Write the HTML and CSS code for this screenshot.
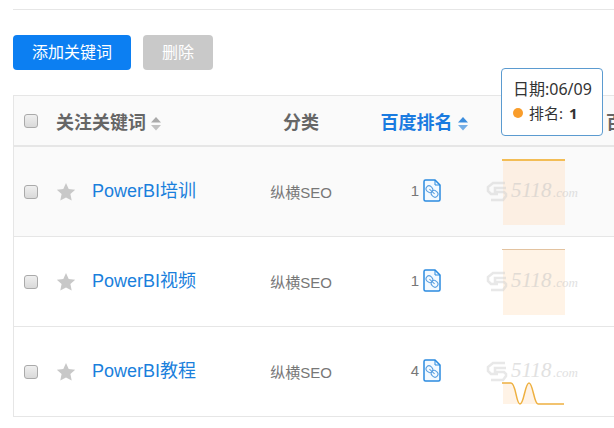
FILE: index.html
```html
<!DOCTYPE html>
<html lang="zh-CN">
<head>
    <meta charset="UTF-8">
    <meta name="viewport" content="width=device-width, initial-scale=1.0">
    <title>关键词排名</title>
    <link rel="stylesheet" href="styles.css">
</head>
<body>
    <!-- shared icons -->
    <svg class="sprite" aria-hidden="true">
        <symbol id="star" viewBox="0 0 20 20">
            <path d="M10 1l2.700 6 6.500.7-4.800 4.400 1.300 6.500L10 15.400l-5.700 3.200 1.300-6.500L.8 7.700l6.500-.7z" fill="#c8c8c8"/>
        </symbol>
        <symbol id="snapshot" viewBox="0 0 18 23">
            <g fill="none" stroke="#2b8be0">
                <path d="M2.500 1H12l5 5v14.500a1.500 1.500 0 0 1-1.500 1.500h-13A1.500 1.500 0 0 1 1 20.500v-18A1.500 1.500 0 0 1 2.500 1z" stroke-width="1.500" fill="#f4faff"/>
                <path d="M12 1v5h5"/>
                <g transform="rotate(42 9 12.500)" stroke="#5a9fe0">
                    <rect x="2" y="9.500" width="7" height="6" rx="3"/>
                    <rect x="9" y="9.500" width="7" height="6" rx="3"/>
                    <path d="M5.500 12.500h7"/>
                </g>
            </g>
        </symbol>
        <symbol id="sort" viewBox="0 0 10 14">
            <path class="sort-up" d="M0 5.500L5 0l5 5.500z"/>
            <path class="sort-down" d="M0 8h10l-5 5.500z"/>
        </symbol>
        <symbol id="mark" viewBox="0 0 24 24">
            <path d="M19 4H7L2 8v4l3 3h7M20 9H9v4h9l2 2v2l-3 4H5" fill="none" stroke="#d2d2d2" stroke-width="2.500"/>
        </symbol>
    </svg>

    <div class="page">
        <hr class="divider">

        <div class="toolbar">
            <button type="button" class="btn btn-primary">添加关键词</button>
            <button type="button" class="btn btn-disabled">删除</button>
        </div>

        <div class="table-wrap">
            <table class="rank-table">
                <colgroup>
                    <col class="col-check">
                    <col class="col-star">
                    <col class="col-keyword">
                    <col class="col-type">
                    <col class="col-rank">
                    <col class="col-trend">
                    <col class="col-more">
                </colgroup>
                <thead>
                    <tr>
                        <th><input type="checkbox" class="check" aria-label="全选"></th>
                        <th class="left">关注</th>
                        <th class="left">关键词<svg class="sort"><use href="#sort"/></svg></th>
                        <th>分类</th>
                        <th class="sorted">百度排名<svg class="sort"><use href="#sort"/></svg></th>
                        <th></th>
                        <th class="left">百</th>
                    </tr>
                </thead>
                <tbody>
                    <tr class="active">
                        <td><input type="checkbox" class="check" aria-label="PowerBI培训"></td>
                        <td class="left"><svg class="star"><use href="#star"/></svg></td>
                        <td class="left"><a href="#" class="keyword">PowerBI培训</a></td>
                        <td>纵横SEO</td>
                        <td><span class="rank">1<svg class="snapshot"><use href="#snapshot"/></svg></span></td>
                        <td class="left">
                            <svg class="trend" viewBox="0 0 96 66">
                                <rect x="17" y="1" width="62" height="65" fill="#fcefe3"/>
                                <path d="M16 1h63" stroke="#f3bd55" stroke-width="2"/>
                                <g class="watermark">
                                    <use href="#mark" y="20" width="24" height="24"/>
                                    <text x="25" y="38" class="mark-name">5118</text>
                                    <text x="67" y="38" class="mark-domain">.com</text>
                                </g>
                            </svg>
                        </td>
                        <td></td>
                    </tr>
                    <tr>
                        <td><input type="checkbox" class="check" aria-label="PowerBI视频"></td>
                        <td class="left"><svg class="star"><use href="#star"/></svg></td>
                        <td class="left"><a href="#" class="keyword">PowerBI视频</a></td>
                        <td>纵横SEO</td>
                        <td><span class="rank">1<svg class="snapshot"><use href="#snapshot"/></svg></span></td>
                        <td class="left">
                            <svg class="trend" viewBox="0 0 96 66">
                                <rect x="17" y="1" width="62" height="65" fill="#fff3e6"/>
                                <path d="M16 .5h63" stroke="#e3c3a0"/>
                                <g class="watermark">
                                    <use href="#mark" y="20" width="24" height="24"/>
                                    <text x="25" y="38" class="mark-name">5118</text>
                                    <text x="67" y="38" class="mark-domain">.com</text>
                                </g>
                            </svg>
                        </td>
                        <td></td>
                    </tr>
                    <tr>
                        <td><input type="checkbox" class="check" aria-label="PowerBI教程"></td>
                        <td class="left"><svg class="star"><use href="#star"/></svg></td>
                        <td class="left"><a href="#" class="keyword">PowerBI教程</a></td>
                        <td>纵横SEO</td>
                        <td><span class="rank">4<svg class="snapshot"><use href="#snapshot"/></svg></span></td>
                        <td class="left">
                            <svg class="trend" viewBox="0 0 96 66">
                                <path d="M17 44h8c5 0 5 21 9 21s5-21 9-21 5 21 9 21H17z" fill="#fff3e6"/>
                                <path d="M16 44h9c5 0 5 21 9 21s5-21 9-21 5 21 9 21h26" fill="none" stroke="#eeb040" stroke-width="1.500"/>
                                <g class="watermark">
                                    <use href="#mark" y="20" width="24" height="24"/>
                                    <text x="25" y="38" class="mark-name">5118</text>
                                    <text x="67" y="38" class="mark-domain">.com</text>
                                </g>
                            </svg>
                        </td>
                        <td></td>
                    </tr>
                </tbody>
            </table>
        </div>

        <!-- chart tooltip -->
        <div class="tooltip">
            <div class="tooltip-date">日期:06/09</div>
            <div class="tooltip-row"><span class="dot"></span>排名: <b>1</b></div>
        </div>
    </div>
</body>
</html>
```

FILE: styles.css
```css
* {
    box-sizing: border-box;
}

body {
    margin: 0;
    background: #fff;
    color: #777;
    font-family: "Liberation Sans", "Noto Sans CJK SC", sans-serif;
    font-size: 15px;
}

.sprite {
    position: absolute;
    width: 0;
    height: 0;
}

.page {
    position: relative;
    padding: 9px 0 0 13px;
}

.divider {
    height: 1px;
    margin: 0;
    border: none;
    background: #e6e6e6;
}

.toolbar {
    display: flex;
    gap: 12px;
    padding: 25px 0;
}

.btn {
    height: 35px;
    padding: 0 19px 3px;
    border: none;
    border-radius: 4px;
    color: #fff;
    font-family: inherit;
    font-size: 16px;
    cursor: pointer;
}

.btn-primary {
    background: #0c7ff2;
}

.btn-disabled {
    background: #c9c9c9;
}

/* table */
.table-wrap {
    overflow: hidden;
}

.rank-table {
    width: 100%;
    min-width: 720px;
    table-layout: fixed;
    border-collapse: separate;
    border-spacing: 0;
    border: 1px solid #e6e6e6;
    border-bottom: none;
}

.col-check {
    width: 42px;
}

.col-star {
    width: 36px;
}

.col-keyword {
    width: 148px;
}

.col-type {
    width: 122px;
}

.col-rank {
    width: 124px;
}

.col-trend {
    width: 120px;
}

th,
td {
    padding: 0;
    text-align: center;
    vertical-align: middle;
    white-space: nowrap;
}

th {
    height: 51px;
    background: #fafafa;
    border-bottom: 2px solid #e6e6e6;
    color: #666;
    font-size: 18px;
}

td {
    height: 90px;
    border-bottom: 1px solid #e6e6e6;
}

th:first-child,
td:first-child {
    padding-left: 10px;
    text-align: left;
}

.left {
    text-align: left;
}

.active td {
    background: #fafafa;
}

.check {
    appearance: none;
    display: block;
    width: 14px;
    height: 14px;
    margin: 0;
    border: 1px solid #aaa;
    border-radius: 3px;
    background: linear-gradient(#efefef, #d9d9d9);
}

.sort {
    width: 10px;
    height: 14px;
    margin-left: 5px;
    vertical-align: -2px;
    fill: #aaa;
}

.sorted {
    color: #1a7be0;
}

.sorted .sort {
    fill: #3c8ddd;
}

.sort-down {
    opacity: 0.7;
}

.star {
    display: block;
    width: 20px;
    height: 20px;
}

.keyword {
    display: block;
    padding-bottom: 6px;
    color: #1a7fdc;
    font-size: 18px;
    text-decoration: none;
}

.rank {
    display: inline-flex;
    align-items: center;
    gap: 4px;
    padding: 0 0 2px 4px;
}

.snapshot {
    width: 18px;
    height: 23px;
}

.trend {
    display: block;
    width: 96px;
    height: 66px;
}

.watermark {
    opacity: 0.5;
}

.mark-name {
    fill: #c4c4c4;
    font: italic 21px "Liberation Serif", serif;
}

.mark-domain {
    fill: #c4c4c4;
    font: italic 13px "Liberation Serif", serif;
}

/* tooltip */
.tooltip {
    position: absolute;
    top: 68px;
    left: 501px;
    padding: 8px 10px 10px 11px;
    border: 1px solid #5b9bd0;
    border-radius: 4px;
    background: #fff;
    color: #333;
    font-family: "Noto Sans", "Noto Sans CJK SC", sans-serif;
    font-size: 15px;
    line-height: 24px;
}

.tooltip-date {
    font-size: 16px;
}

.tooltip-row {
    display: flex;
    align-items: center;
    gap: 6px;
}

.dot {
    width: 10px;
    height: 10px;
    border-radius: 50%;
    background: #f99d2b;
}
```
